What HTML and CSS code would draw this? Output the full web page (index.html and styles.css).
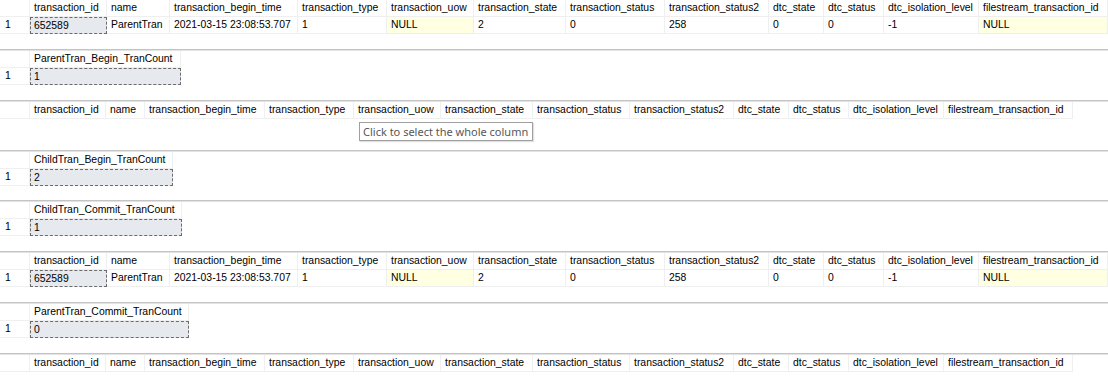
FILE: index.html
```html
<!DOCTYPE html>
<html>
<head>
<meta charset="utf-8">
<link rel="stylesheet" href="styles.css">
</head>
<body>
<div class="results">
  <section class="pane first h49">
    <div class="grid cols-data">
      <div class="hd"></div><div class="hd">transaction_id</div><div class="hd">name</div><div class="hd">transaction_begin_time</div><div class="hd">transaction_type</div><div class="hd">transaction_uow</div><div class="hd">transaction_state</div><div class="hd">transaction_status</div><div class="hd">transaction_status2</div><div class="hd">dtc_state</div><div class="hd">dtc_status</div><div class="hd">dtc_isolation_level</div><div class="hd">filestream_transaction_id</div>
      <div class="cl rn">1</div><div class="cl sel">652589</div><div class="cl">ParentTran</div><div class="cl">2021-03-15 23:08:53.707</div><div class="cl">1</div><div class="cl nul">NULL</div><div class="cl">2</div><div class="cl">0</div><div class="cl">258</div><div class="cl">0</div><div class="cl">0</div><div class="cl">-1</div><div class="cl nul">NULL</div>
    </div>
  </section>
  <section class="pane h51">
    <div class="grid cols-pbt">
      <div class="hd"></div><div class="hd">ParentTran_Begin_TranCount</div>
      <div class="cl rn">1</div><div class="cl sel">1</div>
    </div>
  </section>
  <section class="pane h50">
    <div class="grid cols-empty">
      <div class="hd"></div><div class="hd">transaction_id</div><div class="hd">name</div><div class="hd">transaction_begin_time</div><div class="hd">transaction_type</div><div class="hd">transaction_uow</div><div class="hd">transaction_state</div><div class="hd">transaction_status</div><div class="hd">transaction_status2</div><div class="hd">dtc_state</div><div class="hd">dtc_status</div><div class="hd">dtc_isolation_level</div><div class="hd">filestream_transaction_id</div>
    </div>
    <div class="tooltip">Click to select the whole column</div>
  </section>
  <section class="pane h50">
    <div class="grid cols-cbt">
      <div class="hd"></div><div class="hd">ChildTran_Begin_TranCount</div>
      <div class="cl rn">1</div><div class="cl sel">2</div>
    </div>
  </section>
  <section class="pane h51">
    <div class="grid cols-cct">
      <div class="hd"></div><div class="hd">ChildTran_Commit_TranCount</div>
      <div class="cl rn">1</div><div class="cl sel">1</div>
    </div>
  </section>
  <section class="pane h51">
    <div class="grid cols-data">
      <div class="hd"></div><div class="hd">transaction_id</div><div class="hd">name</div><div class="hd">transaction_begin_time</div><div class="hd">transaction_type</div><div class="hd">transaction_uow</div><div class="hd">transaction_state</div><div class="hd">transaction_status</div><div class="hd">transaction_status2</div><div class="hd">dtc_state</div><div class="hd">dtc_status</div><div class="hd">dtc_isolation_level</div><div class="hd">filestream_transaction_id</div>
      <div class="cl rn">1</div><div class="cl sel">652589</div><div class="cl">ParentTran</div><div class="cl">2021-03-15 23:08:53.707</div><div class="cl">1</div><div class="cl nul">NULL</div><div class="cl">2</div><div class="cl">0</div><div class="cl">258</div><div class="cl">0</div><div class="cl">0</div><div class="cl">-1</div><div class="cl nul">NULL</div>
    </div>
  </section>
  <section class="pane h51">
    <div class="grid cols-pct">
      <div class="hd"></div><div class="hd">ParentTran_Commit_TranCount</div>
      <div class="cl rn">1</div><div class="cl sel">0</div>
    </div>
  </section>
  <section class="pane rest">
    <div class="grid cols-empty">
      <div class="hd"></div><div class="hd">transaction_id</div><div class="hd">name</div><div class="hd">transaction_begin_time</div><div class="hd">transaction_type</div><div class="hd">transaction_uow</div><div class="hd">transaction_state</div><div class="hd">transaction_status</div><div class="hd">transaction_status2</div><div class="hd">dtc_state</div><div class="hd">dtc_status</div><div class="hd">dtc_isolation_level</div><div class="hd">filestream_transaction_id</div>
    </div>
  </section>
</div>
</body>
</html>
```

FILE: styles.css
```css
html, body {
  margin: 0;
  padding: 0;
  background: #ffffff;
  overflow: hidden;
}

.results {
  width: 1108px;
  height: 390px;
  display: flex;
  flex-direction: column;
  font-family: "Liberation Sans", Arial, sans-serif;
  font-size: 10.4px;
  color: #000000;
}

.pane {
  box-sizing: border-box;
  flex: none;
  border-top: 1px solid #c4c4c4;
  box-shadow: inset 0 1px 0 #e2e2e2;
  padding-top: 1px;
  position: relative;
}

.pane.first {
  border-top: none;
  box-shadow: none;
  padding-top: 0;
}

.h49 { height: 49px; }
.h50 { height: 50px; }
.h51 { height: 51px; }
.rest { flex: 1; }

.grid {
  display: grid;
  grid-auto-rows: 17px;
  width: max-content;
}

.cols-data { grid-template-columns: 30px 77px 63px 128px 89px 87px 92px 99px 104px 55px 60px 95px 129px; }
.cols-empty { grid-template-columns: 30px 76px 39px 120px 89px 87px 92px 97px 104px 55px 60px 95px 129px; }
.cols-pbt { grid-template-columns: 30px 151px; }
.cols-cbt { grid-template-columns: 30px 143px; }
.cols-cct { grid-template-columns: 30px 152px; }
.cols-pct { grid-template-columns: 30px 159px; }

.hd, .cl {
  box-sizing: border-box;
  line-height: 16px;
  padding-left: 4px;
  white-space: nowrap;
  overflow: hidden;
  border-right: 1px solid #efefef;
  border-bottom: 1px solid #efefef;
}

.cl.rn { padding-left: 5px; }

.sel {
  background: #e6e9ee;
  border: 1px dashed #6b6b6b;
  padding-left: 3px;
  line-height: 15px;
}

.nul { background: #ffffe1; }

.tooltip {
  position: absolute;
  left: 359px;
  top: 21px;
  box-sizing: border-box;
  height: 19px;
  padding: 0 4px 0 3px;
  border: 1px solid #a0a0a0;
  background: #ffffff;
  box-shadow: 1px 1px 1px rgba(0,0,0,0.12);
  font-family: "Noto Sans", "Open Sans", sans-serif;
  font-size: 11px;
  line-height: 17px;
  color: #575757;
  white-space: nowrap;
}
```
